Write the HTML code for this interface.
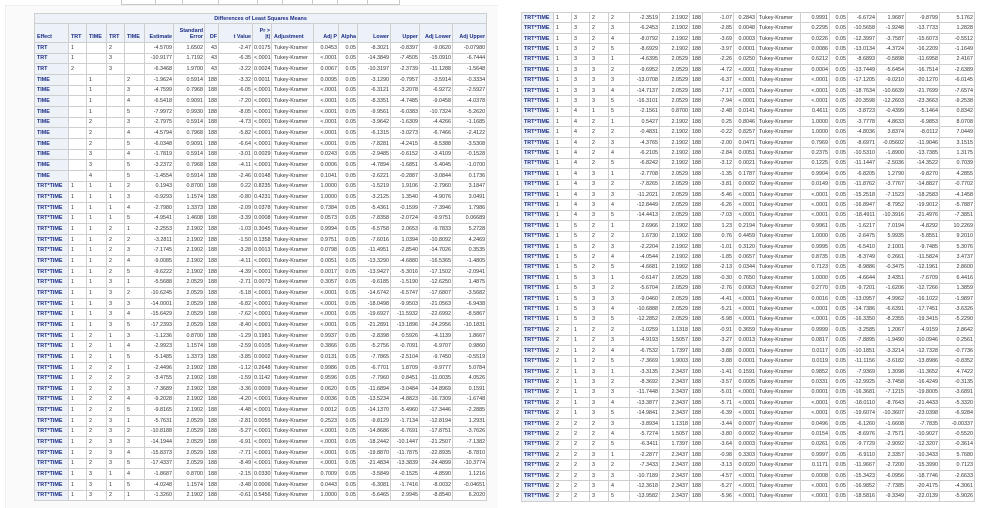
<!DOCTYPE html>
<html><head><meta charset="utf-8"><style>
html,body{margin:0;padding:0;background:#fff;width:999px;height:508px;overflow:hidden;position:relative}
.frame{position:absolute;left:5px;top:5px;width:492px;height:503px;background:#fafafa;border-left:1px solid #eee;border-top:1px solid #eee}
.top{position:absolute;left:121px;top:-1px;width:277px;height:4px;border:1px solid #c8c8c8;background:#fff}
.top i{position:absolute;top:0;bottom:0;border-left:1px solid #c8c8c8}
table{position:absolute;border-collapse:collapse;table-layout:fixed;font-family:"Liberation Sans",sans-serif;font-size:5.4px;color:#333;background:#fff}
td,th{border:1px solid #cfcfcf;padding:0 1px;text-align:right;white-space:nowrap;overflow:hidden}
th{background:#edf1f8;color:#1d2f86;font-weight:bold;text-align:left;padding-left:2px}
td:nth-child(2),td:nth-child(3),td:nth-child(4),td:nth-child(5),td:nth-child(11){text-align:left;padding-left:2px}
#L{left:34px;top:13px;width:452px}
#L tbody tr{height:10.67px}
#L thead th{text-align:right;vertical-align:bottom;padding-bottom:2px;white-space:normal;line-height:6px}
#L thead th.l{text-align:left}
#L thead tr.t th{text-align:center;height:9px;padding:0;vertical-align:middle}
#L thead tr.h{height:19px}
#R{left:521px;top:12px;width:453px}
#R tr{height:10.41px}
</style></head><body>
<div class="frame"></div>
<div class="top"><i style="left:33px"></i><i style="left:60px"></i><i style="left:96px"></i><i style="left:135px"></i><i style="left:160px"></i><i style="left:190px"></i><i style="left:215px"></i><i style="left:245px"></i></div>
<table id="L">
<colgroup><col style="width:34px"><col style="width:18px"><col style="width:20px"><col style="width:18px"><col style="width:20px"><col style="width:29px"><col style="width:31px"><col style="width:14px"><col style="width:34px"><col style="width:19px"><col style="width:42px"><col style="width:25px"><col style="width:19px"><col style="width:33px"><col style="width:29px"><col style="width:33px"><col style="width:34px"></colgroup>
<thead><tr class="t"><th colspan="17">Differences of Least Squares Means</th></tr>
<tr class="h"><th class="l">Effect</th><th class="l">TRT</th><th class="l">TIME</th><th class="l">TRT</th><th class="l">TIME</th><th>Estimate</th><th>Standard Error</th><th>DF</th><th>t Value</th><th>Pr &gt; |t|</th><th class="l">Adjustment</th><th>Adj P</th><th>Alpha</th><th>Lower</th><th>Upper</th><th>Adj Lower</th><th>Adj Upper</th></tr></thead>
<tbody>
<tr><th>TRT</th><td>1<td><td>2<td><td>-4.5709<td>1.6502<td>43<td>-2.47<td>0.0175<td>Tukey-Kramer<td>0.0453<td>0.05<td>-8.3021<td>-0.8397<td>-9.0620<td>-0.07980</tr>
<tr><th>TRT</th><td>1<td><td>3<td><td>-10.9177<td>1.7192<td>43<td>-6.35<td>&lt;.0001<td>Tukey-Kramer<td>&lt;.0001<td>0.05<td>-14.3849<td>-7.4505<td>-15.0910<td>-6.7444</tr>
<tr><th>TRT</th><td>2<td><td>3<td><td>-6.3468<td>1.9700<td>43<td>-3.22<td>0.0024<td>Tukey-Kramer<td>0.0067<td>0.05<td>-10.3197<td>-2.3739<td>-11.1288<td>-1.5648</tr>
<tr><th>TIME</th><td><td>1<td><td>2<td>-1.9624<td>0.5914<td>188<td>-3.32<td>0.0011<td>Tukey-Kramer<td>0.0095<td>0.05<td>-3.1290<td>-0.7957<td>-3.5914<td>-0.3334</tr>
<tr><th>TIME</th><td><td>1<td><td>3<td>-4.7599<td>0.7968<td>188<td>-6.05<td>&lt;.0001<td>Tukey-Kramer<td>&lt;.0001<td>0.05<td>-6.3121<td>-3.2078<td>-6.9272<td>-2.5927</tr>
<tr><th>TIME</th><td><td>1<td><td>4<td>-6.5418<td>0.9091<td>188<td>-7.20<td>&lt;.0001<td>Tukey-Kramer<td>&lt;.0001<td>0.05<td>-8.3351<td>-4.7485<td>-9.0458<td>-4.0378</tr>
<tr><th>TIME</th><td><td>1<td><td>5<td>-7.9972<td>0.9930<td>188<td>-8.05<td>&lt;.0001<td>Tukey-Kramer<td>&lt;.0001<td>0.05<td>-9.9561<td>-6.0383<td>-10.7324<td>-5.2620</tr>
<tr><th>TIME</th><td><td>2<td><td>3<td>-2.7975<td>0.5914<td>188<td>-4.73<td>&lt;.0001<td>Tukey-Kramer<td>&lt;.0001<td>0.05<td>-3.9642<td>-1.6309<td>-4.4266<td>-1.1685</tr>
<tr><th>TIME</th><td><td>2<td><td>4<td>-4.5794<td>0.7968<td>188<td>-5.82<td>&lt;.0001<td>Tukey-Kramer<td>&lt;.0001<td>0.05<td>-6.1315<td>-3.0273<td>-6.7466<td>-2.4122</tr>
<tr><th>TIME</th><td><td>2<td><td>5<td>-6.0348<td>0.9091<td>188<td>-6.64<td>&lt;.0001<td>Tukey-Kramer<td>&lt;.0001<td>0.05<td>-7.8281<td>-4.2415<td>-8.5388<td>-3.5308</tr>
<tr><th>TIME</th><td><td>3<td><td>4<td>-1.7819<td>0.5914<td>188<td>-3.01<td>0.0029<td>Tukey-Kramer<td>0.0243<td>0.05<td>-2.9485<td>-0.6152<td>-3.4109<td>-0.1528</tr>
<tr><th>TIME</th><td><td>3<td><td>5<td>-3.2372<td>0.7968<td>188<td>-4.11<td>&lt;.0001<td>Tukey-Kramer<td>0.0006<td>0.05<td>-4.7894<td>-1.6851<td>-5.4045<td>-1.0700</tr>
<tr><th>TIME</th><td><td>4<td><td>5<td>-1.4554<td>0.5914<td>188<td>-2.46<td>0.0148<td>Tukey-Kramer<td>0.1041<td>0.05<td>-2.6221<td>-0.2887<td>-3.0844<td>0.1736</tr>
<tr><th>TRT*TIME</th><td>1<td>1<td>1<td>2<td>0.1943<td>0.8700<td>188<td>0.22<td>0.8235<td>Tukey-Kramer<td>1.0000<td>0.05<td>-1.5219<td>1.9106<td>-2.7960<td>3.1847</tr>
<tr><th>TRT*TIME</th><td>1<td>1<td>1<td>3<td>-0.9293<td>1.1574<td>188<td>-0.80<td>0.4231<td>Tukey-Kramer<td>1.0000<td>0.05<td>-3.2125<td>1.3540<td>-4.9076<td>3.0491</tr>
<tr><th>TRT*TIME</th><td>1<td>1<td>1<td>4<td>-2.7980<td>1.3373<td>188<td>-2.09<td>0.0378<td>Tukey-Kramer<td>0.7384<td>0.05<td>-5.4361<td>-0.1599<td>-7.3946<td>1.7986</tr>
<tr><th>TRT*TIME</th><td>1<td>1<td>1<td>5<td>-4.9541<td>1.4608<td>188<td>-3.39<td>0.0008<td>Tukey-Kramer<td>0.0573<td>0.05<td>-7.8358<td>-2.0724<td>-9.9751<td>0.06689</tr>
<tr><th>TRT*TIME</th><td>1<td>1<td>2<td>1<td>-2.2553<td>2.1902<td>188<td>-1.03<td>0.3045<td>Tukey-Kramer<td>0.9994<td>0.05<td>-6.5758<td>2.0653<td>-9.7833<td>5.2728</tr>
<tr><th>TRT*TIME</th><td>1<td>1<td>2<td>2<td>-3.2811<td>2.1902<td>188<td>-1.50<td>0.1358<td>Tukey-Kramer<td>0.9751<td>0.05<td>-7.6016<td>1.0394<td>-10.8092<td>4.2469</tr>
<tr><th>TRT*TIME</th><td>1<td>1<td>2<td>3<td>-7.1745<td>2.1902<td>188<td>-3.28<td>0.0013<td>Tukey-Kramer<td>0.0798<td>0.05<td>-11.4951<td>-2.8540<td>-14.7026<td>0.3535</tr>
<tr><th>TRT*TIME</th><td>1<td>1<td>2<td>4<td>-9.0085<td>2.1902<td>188<td>-4.11<td>&lt;.0001<td>Tukey-Kramer<td>0.0051<td>0.05<td>-13.3290<td>-4.6880<td>-16.5365<td>-1.4805</tr>
<tr><th>TRT*TIME</th><td>1<td>1<td>2<td>5<td>-9.6222<td>2.1902<td>188<td>-4.39<td>&lt;.0001<td>Tukey-Kramer<td>0.0017<td>0.05<td>-13.9427<td>-5.3016<td>-17.1502<td>-2.0941</tr>
<tr><th>TRT*TIME</th><td>1<td>1<td>3<td>1<td>-5.5688<td>2.0529<td>188<td>-2.71<td>0.0073<td>Tukey-Kramer<td>0.3057<td>0.05<td>-9.6185<td>-1.5190<td>-12.6250<td>1.4875</tr>
<tr><th>TRT*TIME</th><td>1<td>1<td>3<td>2<td>-10.6245<td>2.0529<td>188<td>-5.18<td>&lt;.0001<td>Tukey-Kramer<td>&lt;.0001<td>0.05<td>-14.6742<td>-6.5747<td>-17.6807<td>-3.5682</tr>
<tr><th>TRT*TIME</th><td>1<td>1<td>3<td>3<td>-14.0001<td>2.0529<td>188<td>-6.82<td>&lt;.0001<td>Tukey-Kramer<td>&lt;.0001<td>0.05<td>-18.0498<td>-9.9503<td>-21.0563<td>-6.9438</tr>
<tr><th>TRT*TIME</th><td>1<td>1<td>3<td>4<td>-15.6429<td>2.0529<td>188<td>-7.62<td>&lt;.0001<td>Tukey-Kramer<td>&lt;.0001<td>0.05<td>-19.6927<td>-11.5932<td>-22.6992<td>-8.5867</tr>
<tr><th>TRT*TIME</th><td>1<td>1<td>3<td>5<td>-17.2393<td>2.0529<td>188<td>-8.40<td>&lt;.0001<td>Tukey-Kramer<td>&lt;.0001<td>0.05<td>-21.2891<td>-13.1896<td>-24.2956<td>-10.1831</tr>
<tr><th>TRT*TIME</th><td>1<td>2<td>1<td>3<td>-1.1236<td>0.8700<td>188<td>-1.29<td>0.1981<td>Tukey-Kramer<td>0.9937<td>0.05<td>-2.8398<td>0.5926<td>-4.1139<td>1.8667</tr>
<tr><th>TRT*TIME</th><td>1<td>2<td>1<td>4<td>-2.9923<td>1.1574<td>188<td>-2.59<td>0.0105<td>Tukey-Kramer<td>0.3866<td>0.05<td>-5.2756<td>-0.7091<td>-6.9707<td>0.9860</tr>
<tr><th>TRT*TIME</th><td>1<td>2<td>1<td>5<td>-5.1485<td>1.3373<td>188<td>-3.85<td>0.0002<td>Tukey-Kramer<td>0.0131<td>0.05<td>-7.7865<td>-2.5104<td>-9.7450<td>-0.5519</tr>
<tr><th>TRT*TIME</th><td>1<td>2<td>2<td>1<td>-2.4496<td>2.1902<td>188<td>-1.12<td>0.2648<td>Tukey-Kramer<td>0.9986<td>0.05<td>-6.7701<td>1.8709<td>-9.9777<td>5.0784</tr>
<tr><th>TRT*TIME</th><td>1<td>2<td>2<td>2<td>-3.4755<td>2.1902<td>188<td>-1.59<td>0.1142<td>Tukey-Kramer<td>0.9596<td>0.05<td>-7.7960<td>0.8451<td>-11.0035<td>4.0526</tr>
<tr><th>TRT*TIME</th><td>1<td>2<td>2<td>3<td>-7.3689<td>2.1902<td>188<td>-3.36<td>0.0009<td>Tukey-Kramer<td>0.0620<td>0.05<td>-11.6894<td>-3.0484<td>-14.8969<td>0.1591</tr>
<tr><th>TRT*TIME</th><td>1<td>2<td>2<td>4<td>-9.2028<td>2.1902<td>188<td>-4.20<td>&lt;.0001<td>Tukey-Kramer<td>0.0036<td>0.05<td>-13.5234<td>-4.8823<td>-16.7309<td>-1.6748</tr>
<tr><th>TRT*TIME</th><td>1<td>2<td>2<td>5<td>-9.8165<td>2.1902<td>188<td>-4.48<td>&lt;.0001<td>Tukey-Kramer<td>0.0012<td>0.05<td>-14.1370<td>-5.4960<td>-17.3446<td>-2.2885</tr>
<tr><th>TRT*TIME</th><td>1<td>2<td>3<td>1<td>-5.7631<td>2.0529<td>188<td>-2.81<td>0.0055<td>Tukey-Kramer<td>0.2523<td>0.05<td>-9.8129<td>-1.7134<td>-12.8194<td>1.2931</tr>
<tr><th>TRT*TIME</th><td>1<td>2<td>3<td>2<td>-10.8188<td>2.0529<td>188<td>-5.27<td>&lt;.0001<td>Tukey-Kramer<td>&lt;.0001<td>0.05<td>-14.8686<td>-6.7691<td>-17.8751<td>-3.7626</tr>
<tr><th>TRT*TIME</th><td>1<td>2<td>3<td>3<td>-14.1944<td>2.0529<td>188<td>-6.91<td>&lt;.0001<td>Tukey-Kramer<td>&lt;.0001<td>0.05<td>-18.2442<td>-10.1447<td>-21.2507<td>-7.1382</tr>
<tr><th>TRT*TIME</th><td>1<td>2<td>3<td>4<td>-15.8373<td>2.0529<td>188<td>-7.71<td>&lt;.0001<td>Tukey-Kramer<td>&lt;.0001<td>0.05<td>-19.8870<td>-11.7875<td>-22.8935<td>-8.7810</tr>
<tr><th>TRT*TIME</th><td>1<td>2<td>3<td>5<td>-17.4337<td>2.0529<td>188<td>-8.49<td>&lt;.0001<td>Tukey-Kramer<td>&lt;.0001<td>0.05<td>-21.4834<td>-13.3839<td>-24.4899<td>-10.3774</tr>
<tr><th>TRT*TIME</th><td>1<td>3<td>1<td>4<td>-1.8687<td>0.8700<td>188<td>-2.15<td>0.0330<td>Tukey-Kramer<td>0.7009<td>0.05<td>-3.5849<td>-0.1525<td>-4.8590<td>1.1216</tr>
<tr><th>TRT*TIME</th><td>1<td>3<td>1<td>5<td>-4.0248<td>1.1574<td>188<td>-3.48<td>0.0006<td>Tukey-Kramer<td>0.0443<td>0.05<td>-6.3081<td>-1.7416<td>-8.0032<td>-0.04651</tr>
<tr><th>TRT*TIME</th><td>1<td>3<td>2<td>1<td>-1.3260<td>2.1902<td>188<td>-0.61<td>0.5456<td>Tukey-Kramer<td>1.0000<td>0.05<td>-5.6465<td>2.9945<td>-8.8540<td>6.2020</tr>
</tbody></table>

<table id="R">
<colgroup><col style="width:32px"><col style="width:18px"><col style="width:18px"><col style="width:19px"><col style="width:21px"><col style="width:30px"><col style="width:30px"><col style="width:13px"><col style="width:31px"><col style="width:23px"><col style="width:44px"><col style="width:29px"><col style="width:18px"><col style="width:29px"><col style="width:29px"><col style="width:34px"><col style="width:35px"></colgroup>
<tbody>
<tr><th>TRT*TIME</th><td>1<td>3<td>2<td>2<td>-2.3519<td>2.1902<td>188<td>-1.07<td>0.2843<td>Tukey-Kramer<td>0.9991<td>0.05<td>-6.6724<td>1.9687<td>-9.8799<td>5.1762</tr>
<tr><th>TRT*TIME</th><td>1<td>3<td>2<td>3<td>-6.2453<td>2.1902<td>188<td>-2.85<td>0.0048<td>Tukey-Kramer<td>0.2295<td>0.05<td>-10.5658<td>-1.9248<td>-13.7733<td>1.2828</tr>
<tr><th>TRT*TIME</th><td>1<td>3<td>2<td>4<td>-8.0792<td>2.1902<td>188<td>-3.69<td>0.0003<td>Tukey-Kramer<td>0.0226<td>0.05<td>-12.3997<td>-3.7587<td>-15.6073<td>-0.5512</tr>
<tr><th>TRT*TIME</th><td>1<td>3<td>2<td>5<td>-8.6929<td>2.1902<td>188<td>-3.97<td>0.0001<td>Tukey-Kramer<td>0.0086<td>0.05<td>-13.0134<td>-4.3724<td>-16.2209<td>-1.1649</tr>
<tr><th>TRT*TIME</th><td>1<td>3<td>3<td>1<td>-4.6395<td>2.0529<td>188<td>-2.26<td>0.0250<td>Tukey-Kramer<td>0.6212<td>0.05<td>-8.6893<td>-0.5898<td>-11.6958<td>2.4167</tr>
<tr><th>TRT*TIME</th><td>1<td>3<td>3<td>2<td>-9.6952<td>2.0529<td>188<td>-4.72<td>&lt;.0001<td>Tukey-Kramer<td>0.0004<td>0.05<td>-13.7449<td>-5.6454<td>-16.7514<td>-2.6389</tr>
<tr><th>TRT*TIME</th><td>1<td>3<td>3<td>3<td>-13.0708<td>2.0529<td>188<td>-6.37<td>&lt;.0001<td>Tukey-Kramer<td>&lt;.0001<td>0.05<td>-17.1205<td>-9.0210<td>-20.1270<td>-6.0145</tr>
<tr><th>TRT*TIME</th><td>1<td>3<td>3<td>4<td>-14.7137<td>2.0529<td>188<td>-7.17<td>&lt;.0001<td>Tukey-Kramer<td>&lt;.0001<td>0.05<td>-18.7634<td>-10.6639<td>-21.7699<td>-7.6574</tr>
<tr><th>TRT*TIME</th><td>1<td>3<td>3<td>5<td>-16.3101<td>2.0529<td>188<td>-7.94<td>&lt;.0001<td>Tukey-Kramer<td>&lt;.0001<td>0.05<td>-20.3598<td>-12.2603<td>-23.3663<td>-9.2538</tr>
<tr><th>TRT*TIME</th><td>1<td>4<td>1<td>5<td>-2.1561<td>0.8700<td>188<td>-2.48<td>0.0141<td>Tukey-Kramer<td>0.4611<td>0.05<td>-3.8723<td>-0.4399<td>-5.1464<td>0.8342</tr>
<tr><th>TRT*TIME</th><td>1<td>4<td>2<td>1<td>0.5427<td>2.1902<td>188<td>0.25<td>0.8046<td>Tukey-Kramer<td>1.0000<td>0.05<td>-3.7778<td>4.8633<td>-6.9853<td>8.0708</tr>
<tr><th>TRT*TIME</th><td>1<td>4<td>2<td>2<td>-0.4831<td>2.1902<td>188<td>-0.22<td>0.8257<td>Tukey-Kramer<td>1.0000<td>0.05<td>-4.8036<td>3.8374<td>-8.0112<td>7.0449</tr>
<tr><th>TRT*TIME</th><td>1<td>4<td>2<td>3<td>-4.3765<td>2.1902<td>188<td>-2.00<td>0.0471<td>Tukey-Kramer<td>0.7969<td>0.05<td>-8.6971<td>-0.05602<td>-11.9046<td>3.1515</tr>
<tr><th>TRT*TIME</th><td>1<td>4<td>2<td>4<td>-6.2105<td>2.1902<td>188<td>-2.84<td>0.0051<td>Tukey-Kramer<td>0.2375<td>0.05<td>-10.5310<td>-1.8900<td>-13.7385<td>1.3175</tr>
<tr><th>TRT*TIME</th><td>1<td>4<td>2<td>5<td>-6.8242<td>2.1902<td>188<td>-3.12<td>0.0021<td>Tukey-Kramer<td>0.1225<td>0.05<td>-11.1447<td>-2.5036<td>-14.3522<td>0.7039</tr>
<tr><th>TRT*TIME</th><td>1<td>4<td>3<td>1<td>-2.7708<td>2.0529<td>188<td>-1.35<td>0.1787<td>Tukey-Kramer<td>0.9904<td>0.05<td>-6.8205<td>1.2790<td>-9.8270<td>4.2855</tr>
<tr><th>TRT*TIME</th><td>1<td>4<td>3<td>2<td>-7.8265<td>2.0529<td>188<td>-3.81<td>0.0002<td>Tukey-Kramer<td>0.0149<td>0.05<td>-11.8762<td>-3.7767<td>-14.8827<td>-0.7702</tr>
<tr><th>TRT*TIME</th><td>1<td>4<td>3<td>3<td>-11.2021<td>2.0529<td>188<td>-5.46<td>&lt;.0001<td>Tukey-Kramer<td>&lt;.0001<td>0.05<td>-15.2518<td>-7.1523<td>-18.2583<td>-4.1458</tr>
<tr><th>TRT*TIME</th><td>1<td>4<td>3<td>4<td>-12.8449<td>2.0529<td>188<td>-6.26<td>&lt;.0001<td>Tukey-Kramer<td>&lt;.0001<td>0.05<td>-16.8947<td>-8.7952<td>-19.9012<td>-5.7887</tr>
<tr><th>TRT*TIME</th><td>1<td>4<td>3<td>5<td>-14.4413<td>2.0529<td>188<td>-7.03<td>&lt;.0001<td>Tukey-Kramer<td>&lt;.0001<td>0.05<td>-18.4911<td>-10.3916<td>-21.4976<td>-7.3851</tr>
<tr><th>TRT*TIME</th><td>1<td>5<td>2<td>1<td>2.6966<td>2.1902<td>188<td>1.23<td>0.2194<td>Tukey-Kramer<td>0.9961<td>0.05<td>-1.6217<td>7.0194<td>-4.8292<td>10.2269</tr>
<tr><th>TRT*TIME</th><td>1<td>5<td>2<td>2<td>1.6730<td>2.1902<td>188<td>0.76<td>0.4459<td>Tukey-Kramer<td>1.0000<td>0.05<td>-2.6475<td>5.9935<td>-5.8551<td>9.2010</tr>
<tr><th>TRT*TIME</th><td>1<td>5<td>2<td>3<td>-2.2204<td>2.1902<td>188<td>-1.01<td>0.3120<td>Tukey-Kramer<td>0.9995<td>0.05<td>-6.5410<td>2.1001<td>-9.7485<td>5.3076</tr>
<tr><th>TRT*TIME</th><td>1<td>5<td>2<td>4<td>-4.0544<td>2.1902<td>188<td>-1.85<td>0.0657<td>Tukey-Kramer<td>0.8735<td>0.05<td>-8.3749<td>0.2661<td>-11.5824<td>3.4737</tr>
<tr><th>TRT*TIME</th><td>1<td>5<td>2<td>5<td>-4.6681<td>2.1902<td>188<td>-2.13<td>0.0344<td>Tukey-Kramer<td>0.7123<td>0.05<td>-8.9886<td>-0.3475<td>-12.1961<td>2.8600</tr>
<tr><th>TRT*TIME</th><td>1<td>5<td>3<td>1<td>-0.6147<td>2.0529<td>188<td>-0.30<td>0.7650<td>Tukey-Kramer<td>1.0000<td>0.05<td>-4.6644<td>3.4351<td>-7.6709<td>6.4416</tr>
<tr><th>TRT*TIME</th><td>1<td>5<td>3<td>2<td>-5.6704<td>2.0529<td>188<td>-2.76<td>0.0063<td>Tukey-Kramer<td>0.2770<td>0.05<td>-9.7201<td>-1.6206<td>-12.7266<td>1.3859</tr>
<tr><th>TRT*TIME</th><td>1<td>5<td>3<td>3<td>-9.0460<td>2.0529<td>188<td>-4.41<td>&lt;.0001<td>Tukey-Kramer<td>0.0016<td>0.05<td>-13.0957<td>-4.9962<td>-16.1022<td>-1.9897</tr>
<tr><th>TRT*TIME</th><td>1<td>5<td>3<td>4<td>-10.6888<td>2.0529<td>188<td>-5.21<td>&lt;.0001<td>Tukey-Kramer<td>&lt;.0001<td>0.05<td>-14.7386<td>-6.6391<td>-17.7451<td>-3.6326</tr>
<tr><th>TRT*TIME</th><td>1<td>5<td>3<td>5<td>-12.2852<td>2.0529<td>188<td>-5.98<td>&lt;.0001<td>Tukey-Kramer<td>&lt;.0001<td>0.05<td>-16.3350<td>-8.2355<td>-19.3415<td>-5.2290</tr>
<tr><th>TRT*TIME</th><td>2<td>1<td>2<td>2<td>-1.0259<td>1.1318<td>188<td>-0.91<td>0.3659<td>Tukey-Kramer<td>0.9999<td>0.05<td>-3.2585<td>1.2067<td>-4.9159<td>2.8642</tr>
<tr><th>TRT*TIME</th><td>2<td>1<td>2<td>3<td>-4.9193<td>1.5057<td>188<td>-3.27<td>0.0013<td>Tukey-Kramer<td>0.0817<td>0.05<td>-7.8895<td>-1.9490<td>-10.0946<td>0.2561</tr>
<tr><th>TRT*TIME</th><td>2<td>1<td>2<td>4<td>-6.7532<td>1.7397<td>188<td>-3.88<td>0.0001<td>Tukey-Kramer<td>0.0117<td>0.05<td>-10.1851<td>-3.3214<td>-12.7328<td>-0.7736</tr>
<tr><th>TRT*TIME</th><td>2<td>1<td>2<td>5<td>-7.3669<td>1.9003<td>188<td>-3.88<td>0.0001<td>Tukey-Kramer<td>0.0119<td>0.05<td>-11.1156<td>-3.6182<td>-13.8986<td>-0.8352</tr>
<tr><th>TRT*TIME</th><td>2<td>1<td>3<td>1<td>-3.3135<td>2.3437<td>188<td>-1.41<td>0.1591<td>Tukey-Kramer<td>0.9852<td>0.05<td>-7.9369<td>1.3098<td>-11.3652<td>4.7422</tr>
<tr><th>TRT*TIME</th><td>2<td>1<td>3<td>2<td>-8.3692<td>2.3437<td>188<td>-3.57<td>0.0005<td>Tukey-Kramer<td>0.0331<td>0.05<td>-12.9925<td>-3.7458<td>-16.4249<td>-0.3135</tr>
<tr><th>TRT*TIME</th><td>2<td>1<td>3<td>3<td>-11.7448<td>2.3437<td>188<td>-5.01<td>&lt;.0001<td>Tukey-Kramer<td>0.0001<td>0.05<td>-16.3681<td>-7.1215<td>-19.8005<td>-3.6891</tr>
<tr><th>TRT*TIME</th><td>2<td>1<td>3<td>4<td>-13.3877<td>2.3437<td>188<td>-5.71<td>&lt;.0001<td>Tukey-Kramer<td>&lt;.0001<td>0.05<td>-18.0110<td>-8.7643<td>-21.4433<td>-5.3320</tr>
<tr><th>TRT*TIME</th><td>2<td>1<td>3<td>5<td>-14.9841<td>2.3437<td>188<td>-6.39<td>&lt;.0001<td>Tukey-Kramer<td>&lt;.0001<td>0.05<td>-19.6074<td>-10.3607<td>-23.0398<td>-6.9284</tr>
<tr><th>TRT*TIME</th><td>2<td>2<td>2<td>3<td>-3.8934<td>1.1318<td>188<td>-3.44<td>0.0007<td>Tukey-Kramer<td>0.0496<td>0.05<td>-6.1260<td>-1.6608<td>-7.7835<td>-0.00337</tr>
<tr><th>TRT*TIME</th><td>2<td>2<td>2<td>4<td>-5.7274<td>1.5057<td>188<td>-3.80<td>0.0002<td>Tukey-Kramer<td>0.0154<td>0.05<td>-8.6976<td>-2.7571<td>-10.9027<td>-0.5520</tr>
<tr><th>TRT*TIME</th><td>2<td>2<td>2<td>5<td>-6.3411<td>1.7397<td>188<td>-3.64<td>0.0003<td>Tukey-Kramer<td>0.0261<td>0.05<td>-9.7729<td>-2.9092<td>-12.3207<td>-0.3614</tr>
<tr><th>TRT*TIME</th><td>2<td>2<td>3<td>1<td>-2.2877<td>2.3437<td>188<td>-0.98<td>0.3303<td>Tukey-Kramer<td>0.9997<td>0.05<td>-6.9110<td>2.3357<td>-10.3433<td>5.7680</tr>
<tr><th>TRT*TIME</th><td>2<td>2<td>3<td>2<td>-7.3433<td>2.3437<td>188<td>-3.13<td>0.0020<td>Tukey-Kramer<td>0.1171<td>0.05<td>-11.9667<td>-2.7200<td>-15.3990<td>0.7123</tr>
<tr><th>TRT*TIME</th><td>2<td>2<td>3<td>3<td>-10.7189<td>2.3437<td>188<td>-4.57<td>&lt;.0001<td>Tukey-Kramer<td>0.0008<td>0.05<td>-15.3423<td>-6.0956<td>-18.7746<td>-2.6633</tr>
<tr><th>TRT*TIME</th><td>2<td>2<td>3<td>4<td>-12.3618<td>2.3437<td>188<td>-5.27<td>&lt;.0001<td>Tukey-Kramer<td>&lt;.0001<td>0.05<td>-16.9852<td>-7.7385<td>-20.4175<td>-4.3061</tr>
<tr><th>TRT*TIME</th><td>2<td>2<td>3<td>5<td>-13.9582<td>2.3437<td>188<td>-5.96<td>&lt;.0001<td>Tukey-Kramer<td>&lt;.0001<td>0.05<td>-18.5816<td>-9.3349<td>-22.0139<td>-5.9026</tr>
</tbody></table>
</body></html>
